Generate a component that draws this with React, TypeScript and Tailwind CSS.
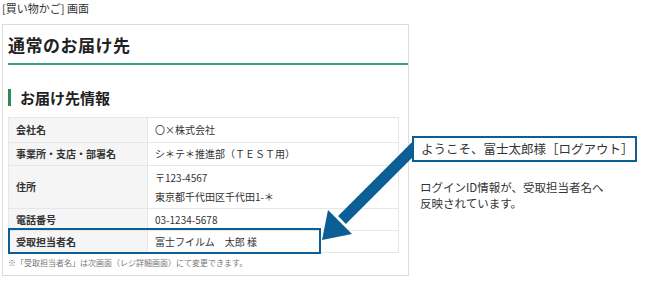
const rows: { label: string; value: string[]; h: string }[] = [
  { label: '会社名', value: ['〇×株式会社'], h: 'h-[24px]' },
  { label: '事業所・支店・部署名', value: ['シ＊テ＊推進部（ＴＥＳＴ用）'], h: 'h-[23px]' },
  { label: '住所', value: ['〒123-4567', '東京都千代田区千代田1-＊'], h: 'h-[43px]' },
  { label: '電話番号', value: ['03-1234-5678'], h: 'h-[22px]' },
  { label: '受取担当者名', value: ['富士フイルム　太郎 様'], h: 'h-[22px]' },
];

const App = () => {
  return (
    <div
      className="relative h-[287px] w-[660px] overflow-hidden bg-white text-[#333]"
      style={{ fontFamily: '"Noto Sans CJK JP", "Noto Sans", sans-serif' }}
    >
      <p className="pl-[2px] pt-[1px] text-[11px] leading-[14px] text-[#333]">[買い物かご] 画面</p>

      <div className="mt-[9px] flex">
        {/* panel */}
        <div className="ml-[2px] h-[252px] w-[407px] border border-[#dcdcdc]">
          <div className="ml-[5px] mt-[9px] border-b-2 border-[#3f9f7f] pb-[7px]">
            <h1 className="text-[17px] font-bold leading-[22px] tracking-[0.5px] text-[#222]">通常のお届け先</h1>
          </div>
          <div className="ml-[5px] mt-[24px] flex items-center border-l-[3px] border-[#2e8a55] pl-[9px]">
            <h2 className="text-[15px] font-bold leading-[17px] text-[#222]">お届け先情報</h2>
          </div>
          <div className="relative ml-[5px] mt-[11px] w-[391px] border border-[#e6e6e6]">
            {rows.map((r, i) => (
              <div key={r.label} className={`flex ${r.h} ${i > 0 ? 'border-t border-[#e6e6e6]' : ''}`}>
                <div className="flex w-[139px] items-center border-r border-[#e6e6e6] bg-[#f5f5f5] pl-[7px] text-[10px] font-bold leading-none">
                  {r.label}
                </div>
                <div className="flex flex-col justify-center gap-[9px] pl-[7px] text-[10px] leading-none">
                  {r.value.map((v) => (
                    <span key={v}>{v}</span>
                  ))}
                </div>
              </div>
            ))}
            {/* highlight on last row */}
            <div className="absolute bottom-[-2px] left-[-1px] h-[26px] w-[313px] border-2 border-[#0b5f95]" />
          </div>
          <p className="ml-[5px] mt-[5px] text-[8px] leading-[10px] text-[#777]">
            ※「受取担当者名」は次画面（レジ詳細画面）にて変更できます。
          </p>
        </div>

        {/* right column */}
        <div className="relative z-10 ml-[3px] pt-[112px]">
          <div className="flex h-[26px] w-[225px] items-center border-2 border-[#0b5f95] bg-white pl-[7px] text-[12.5px] leading-none text-[#333]">
            ようこそ、富士太郎様［ログアウト］
          </div>
          <p className="ml-[8px] mt-[17px] text-[11.5px] leading-[16px] text-[#333]">
            ログインID情報が、受取担当者名へ
            <br />
            反映されています。
          </p>
        </div>
      </div>

      {/* arrow overlay */}
      <svg className="pointer-events-none absolute left-0 top-0" width="660" height="287" viewBox="0 0 660 287">
        <line x1="420" y1="142" x2="342" y2="220" stroke="#0b5f95" strokeWidth="11" />
        <polygon points="322,240 328,210 352,234" fill="#0b5f95" />
      </svg>
    </div>
  );
};

export default App;
